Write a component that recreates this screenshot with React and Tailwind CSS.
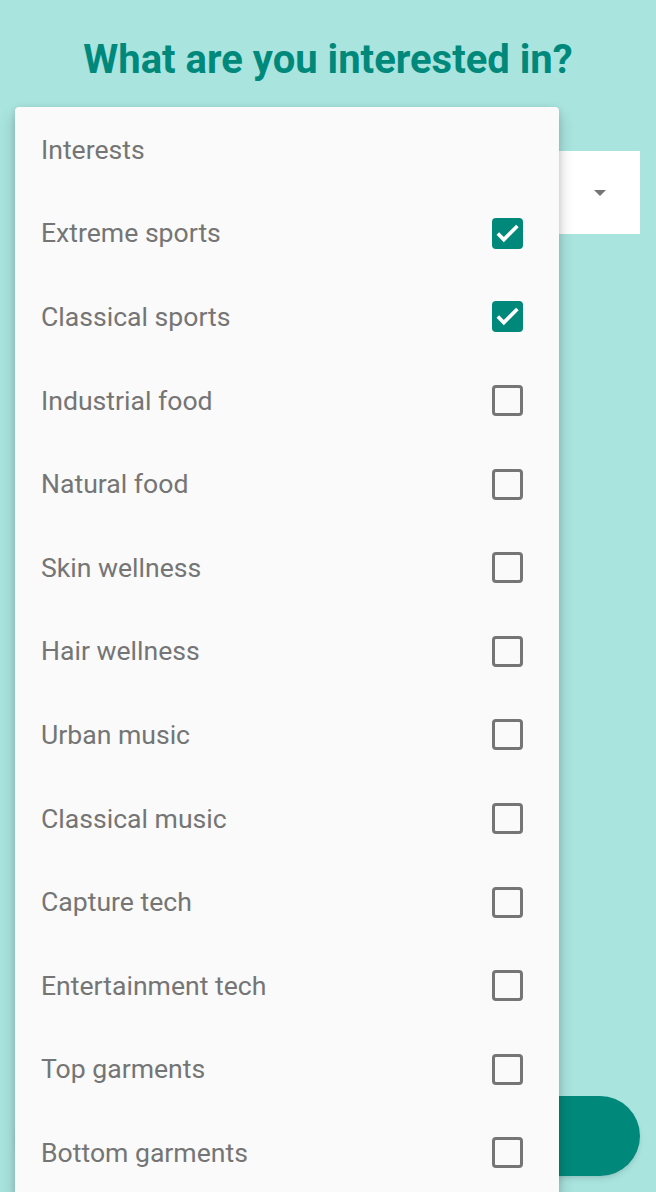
import React from "react"

const interests = [
  {label: "Extreme sports", checked: true},
  {label: "Classical sports", checked: true},
  {label: "Industrial food", checked: false},
  {label: "Natural food", checked: false},
  {label: "Skin wellness", checked: false},
  {label: "Hair wellness", checked: false},
  {label: "Urban music", checked: false},
  {label: "Classical music", checked: false},
  {label: "Capture tech", checked: false},
  {label: "Entertainment tech", checked: false},
  {label: "Top garments", checked: false},
  {label: "Bottom garments", checked: false}
]

function Checkbox({checked}) {
  if (checked) {
    return (
      <span className="block h-[31px] w-[31px] rounded-[4px] bg-[#00897b]">
        <svg width="31" height="31" viewBox="0 0 31 31" fill="none">
          <path d="M5.8 15.6l6 6L25.4 8" stroke="white" strokeWidth="3.6" strokeLinecap="butt" />
        </svg>
      </span>
    )
  }
  return <span className="block h-[31px] w-[31px] rounded-[4px] border-[3px] border-[#757575]" />
}

export default function App() {
  return (
    <div
      className="relative h-[1192px] w-[656px] overflow-hidden bg-[#a9e4df]"
      style={{fontFamily: "Roboto, 'Noto Sans', sans-serif"}}
    >
      <div className="flex h-full flex-col px-4">
        <h1 className="pt-[36px] text-center text-[40px] font-bold leading-[48px] text-[#00897b]">
          What are you interested in?
        </h1>
        <div className="mt-[67px] flex h-[83px] items-center justify-end bg-white pr-[34px]">
          <span className="h-0 w-0 border-x-[6px] border-t-[6px] border-x-transparent border-t-[#757575]" />
        </div>
        <button
          type="button"
          className="mt-auto mb-4 h-[80px] w-full rounded-full bg-[#00897b] shadow-md"
        />
      </div>

      <div className="absolute left-[15px] top-[107px] w-[544px] rounded-t-[4px] bg-[#fafafa] pt-[1px] shadow-[0_8px_16px_rgba(0,0,0,0.2),0_2px_6px_rgba(0,0,0,0.12)]">
        <div className="flex h-[83.6px] items-center pl-[26px] text-[26.6px] text-[#757575]">Interests</div>
        {interests.map((item) => (
          <div
            key={item.label}
            className="flex h-[83.6px] items-center justify-between pl-[26px] pr-[36px] text-[26.6px] text-[#757575]"
          >
            <span>{item.label}</span>
            <Checkbox checked={item.checked} />
          </div>
        ))}
      </div>
    </div>
  )
}
